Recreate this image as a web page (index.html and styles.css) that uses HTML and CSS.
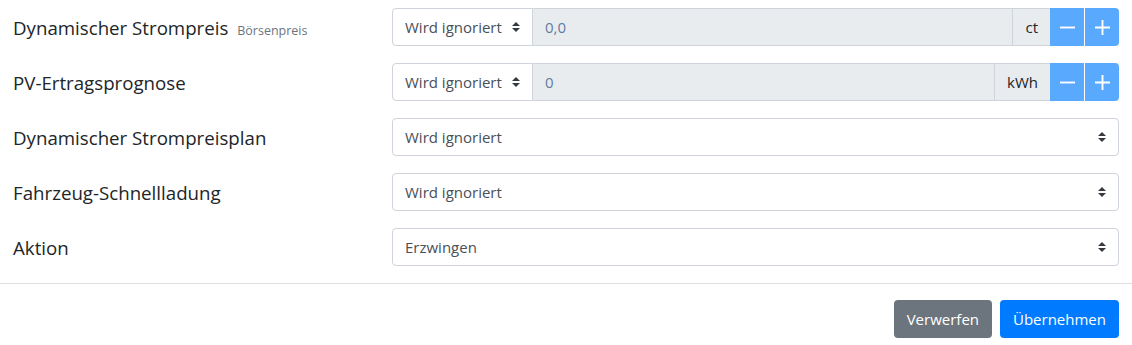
FILE: index.html
```html
<!DOCTYPE html>
<html lang="de">
<head>
    <meta charset="UTF-8">
    <meta name="viewport" content="width=device-width, initial-scale=1.0">
    <title>Ladeeinstellungen</title>
    <link rel="stylesheet" href="styles.css">
</head>
<body>

<div class="modal-body">
    <div class="form-row">
        <label class="col-label">Dynamischer Strompreis <small class="text-muted">Börsenpreis</small></label>
        <div class="col-input">
            <div class="input-group">
                <div class="custom-select select-short">
                    <span>Wird ignoriert</span>
                    <svg class="arrows" viewBox="0 0 4 5"><path d="M2 0L0 2h4zm0 5L0 3h4z"/></svg>
                </div>
                <div class="form-control readonly">0,0</div>
                <span class="input-group-text">ct</span>
                <button class="btn-step">
                    <svg viewBox="0 0 16 16"><path d="M0 8h16"/></svg>
                </button>
                <button class="btn-step last">
                    <svg viewBox="0 0 16 16"><path d="M0 8h16M8 0v16"/></svg>
                </button>
            </div>
        </div>
    </div>

    <div class="form-row">
        <label class="col-label">PV-Ertragsprognose</label>
        <div class="col-input">
            <div class="input-group">
                <div class="custom-select select-short">
                    <span>Wird ignoriert</span>
                    <svg class="arrows" viewBox="0 0 4 5"><path d="M2 0L0 2h4zm0 5L0 3h4z"/></svg>
                </div>
                <div class="form-control readonly">0</div>
                <span class="input-group-text">kWh</span>
                <button class="btn-step">
                    <svg viewBox="0 0 16 16"><path d="M0 8h16"/></svg>
                </button>
                <button class="btn-step last">
                    <svg viewBox="0 0 16 16"><path d="M0 8h16M8 0v16"/></svg>
                </button>
            </div>
        </div>
    </div>

    <div class="form-row">
        <label class="col-label">Dynamischer Strompreisplan</label>
        <div class="col-input">
            <div class="custom-select">
                <span>Wird ignoriert</span>
                <svg class="arrows" viewBox="0 0 4 5"><path d="M2 0L0 2h4zm0 5L0 3h4z"/></svg>
            </div>
        </div>
    </div>

    <div class="form-row">
        <label class="col-label">Fahrzeug-Schnellladung</label>
        <div class="col-input">
            <div class="custom-select">
                <span>Wird ignoriert</span>
                <svg class="arrows" viewBox="0 0 4 5"><path d="M2 0L0 2h4zm0 5L0 3h4z"/></svg>
            </div>
        </div>
    </div>

    <div class="form-row">
        <label class="col-label">Aktion</label>
        <div class="col-input">
            <div class="custom-select">
                <span>Erzwingen</span>
                <svg class="arrows" viewBox="0 0 4 5"><path d="M2 0L0 2h4zm0 5L0 3h4z"/></svg>
            </div>
        </div>
    </div>
</div>

<div class="modal-footer">
    <button class="btn btn-secondary">Verwerfen</button>
    <button class="btn btn-primary">Übernehmen</button>
</div>

</body>
</html>
```

FILE: styles.css
```css
body {
    margin: 0;
    font-family: "Open Sans", "Noto Sans", sans-serif;
    font-size: 15px;
    color: #212529;
    background: #fff;
}
.modal-body {
    padding: 8px 13px 0;
}
.form-row {
    display: flex;
    align-items: center;
    height: 38px;
    margin-bottom: 17px;
}
.col-label {
    width: 379px;
    flex-shrink: 0;
    font-size: 18.7px;
    white-space: nowrap;
}
.text-muted {
    color: #6c757d;
    font-size: 12.5px;
    margin-left: 4px;
}
.col-input {
    flex: 1;
    min-width: 0;
}
.input-group {
    display: flex;
    height: 38px;
}
.custom-select {
    display: flex;
    align-items: center;
    justify-content: space-between;
    height: 38px;
    box-sizing: border-box;
    padding: 0 12px;
    border: 1px solid #ced4da;
    border-radius: 4px;
    color: #495057;
    background: #fff;
}
.custom-select .arrows {
    width: 8px;
    height: 10px;
    fill: #343a40;
}
.select-short {
    width: 141px;
    flex-shrink: 0;
    border-radius: 4px 0 0 4px;
}
.select-short .arrows {
    margin-left: 8px;
}
.form-control {
    flex: 1;
    display: flex;
    align-items: center;
    padding: 0 12px;
    border-top: 1px solid #ced4da;
    border-bottom: 1px solid #ced4da;
    color: #5f7c9f;
}
.readonly {
    background: #e9ecef;
}
.input-group-text {
    display: flex;
    align-items: center;
    padding: 0 12px;
    background: #e9ecef;
    border: 1px solid #ced4da;
    border-right: none;
    color: #212529;
}
.btn-step {
    width: 35px;
    height: 38px;
    border: none;
    border-right: 1px solid #fff;
    padding: 0;
    background: #59a9ff;
    display: flex;
    align-items: center;
    justify-content: center;
}
.btn-step.last {
    width: 34px;
    border-right: none;
    border-radius: 0 4px 4px 0;
}
.btn-step svg {
    width: 15px;
    height: 15px;
    stroke: #fff;
    stroke-width: 2;
    fill: none;
}
.modal-footer {
    display: flex;
    justify-content: flex-end;
    gap: 8px;
    border-top: 1px solid #dee2e6;
    padding: 16px 13px;
}
.btn {
    height: 38px;
    padding: 0 13px;
    border: none;
    border-radius: 4px;
    font-family: inherit;
    font-size: 15px;
    color: #fff;
}
.btn-secondary {
    background: #6c757d;
}
.btn-primary {
    background: #007bff;
}
```
